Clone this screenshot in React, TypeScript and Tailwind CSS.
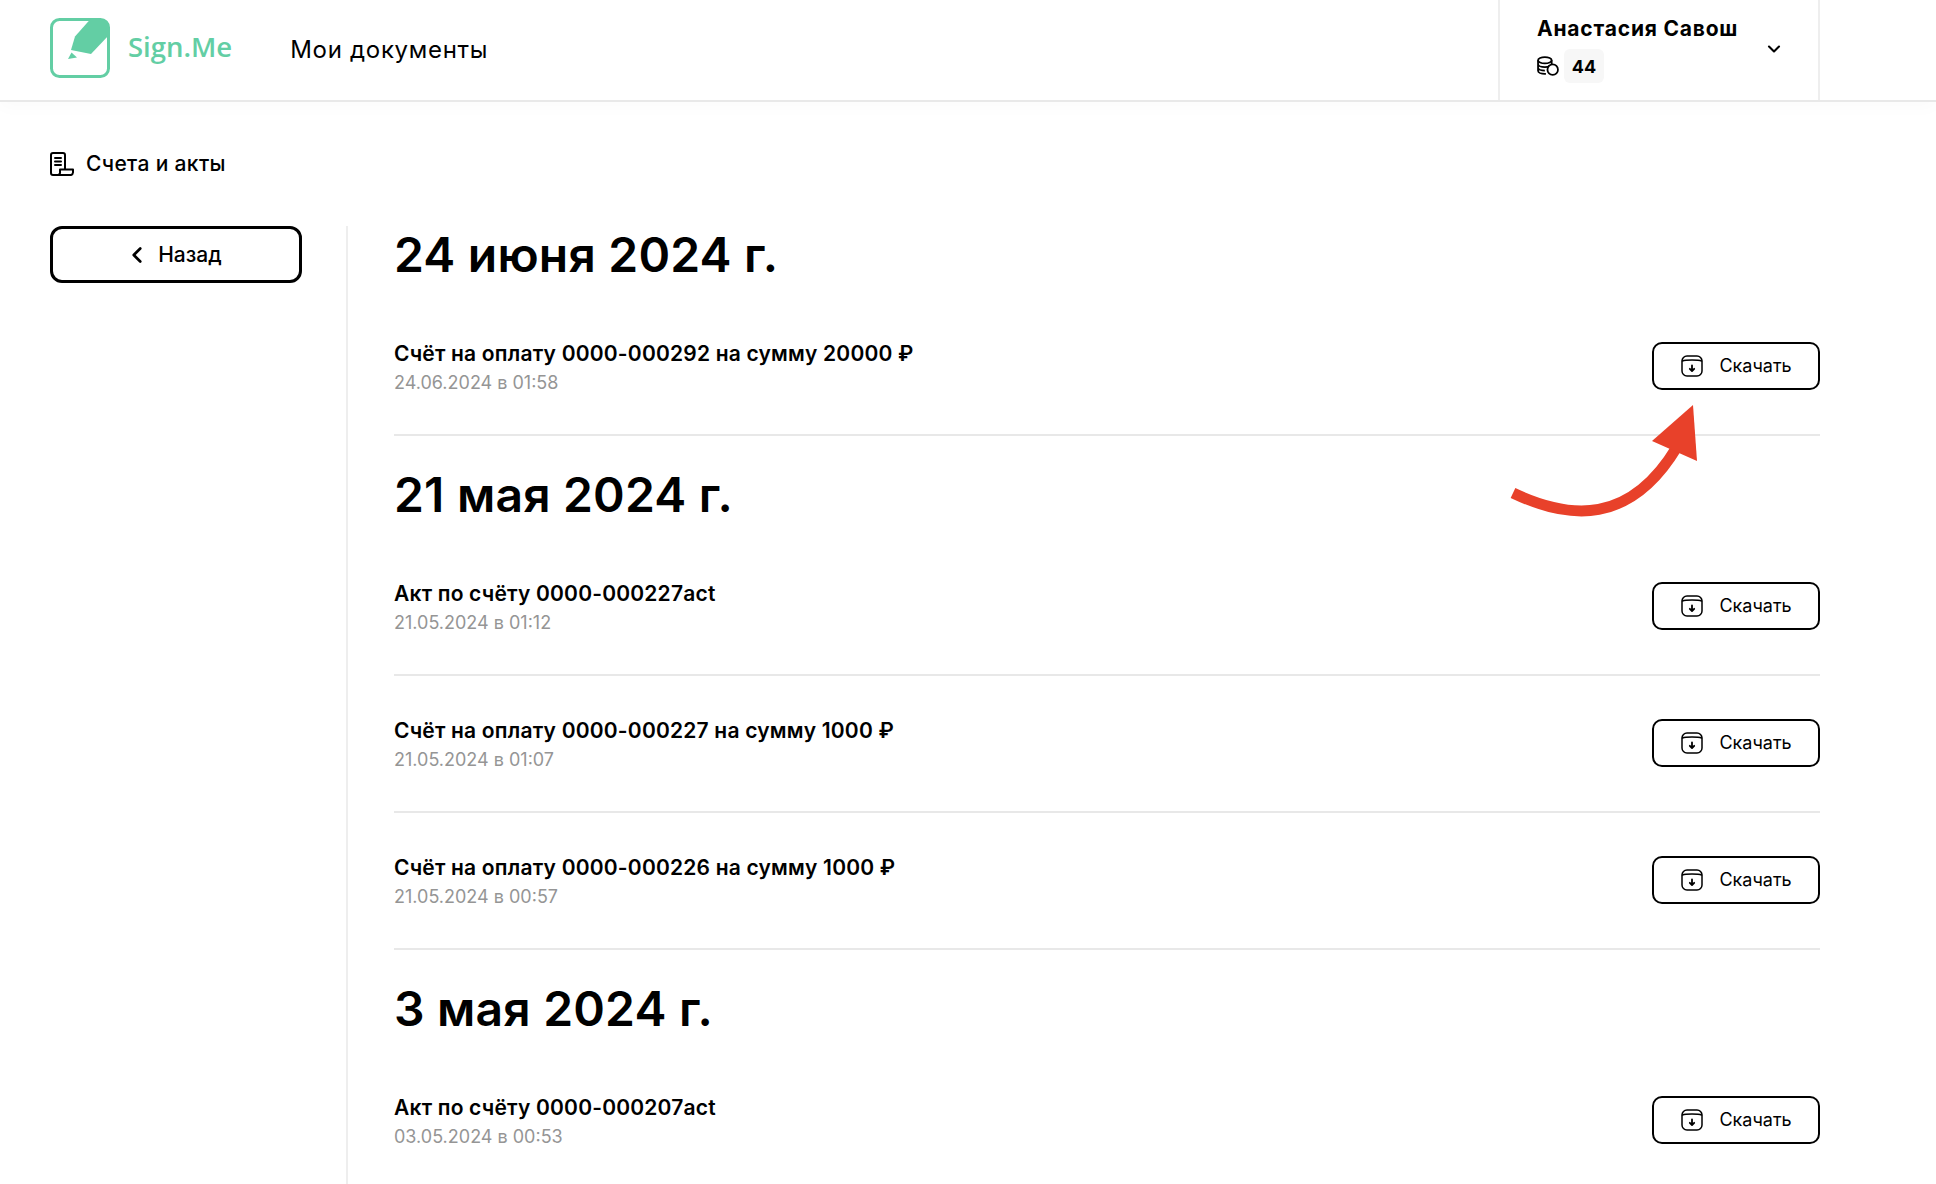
import { ChevronDown, ChevronLeft } from "lucide-react";

type Row = { title: string; date: string };
type Group = { heading: string; rows: Row[] };

const groups: Group[] = [
	{
		heading: "24 июня 2024 г.",
		rows: [{ title: "Счёт на оплату 0000-000292 на сумму 20000 ₽", date: "24.06.2024 в 01:58" }],
	},
	{
		heading: "21 мая 2024 г.",
		rows: [
			{ title: "Акт по счёту 0000-000227act", date: "21.05.2024 в 01:12" },
			{ title: "Счёт на оплату 0000-000227 на сумму 1000 ₽", date: "21.05.2024 в 01:07" },
			{ title: "Счёт на оплату 0000-000226 на сумму 1000 ₽", date: "21.05.2024 в 00:57" },
		],
	},
	{
		heading: "3 мая 2024 г.",
		rows: [{ title: "Акт по счёту 0000-000207act", date: "03.05.2024 в 00:53" }],
	},
];

function Logo() {
	return (
		<svg className="mb-[4px] shrink-0" width="60" height="60" viewBox="0 0 60 60" fill="none">
			<rect x="1.500" y="1.500" width="57" height="57" rx="8" stroke="#63cea4" strokeWidth="3" />
			<path d="M40.500 1H51a8 8 0 0 1 8 8v8L41 36 21 32 25 18.500z" fill="#63cea4" />
			<path d="M21.500 34.500 27 39.500 18 41z" fill="#63cea4" />
		</svg>
	);
}

function ReceiptIcon() {
	return (
		<svg width="24" height="24" viewBox="0 0 24 24" fill="none" stroke="#000" strokeWidth="2" strokeLinecap="round" strokeLinejoin="round">
			<path d="M8 23H3a2 2 0 0 1-2-2V3a2 2 0 0 1 2-2h10a2 2 0 0 1 2 2v14" />
			<path d="M5 6h6M5 9.500h6M5 13h6" />
			<path d="M8 23a2.500 2.500 0 0 0 2-3v-2.500h13V20a3 3 0 0 1-2 3z" />
		</svg>
	);
}

function CoinsIcon() {
	return (
		<svg width="22" height="20" viewBox="0 0 21 19" fill="none" stroke="#000" strokeWidth="1.700">
			<ellipse cx="7.500" cy="4" rx="6.500" ry="3" />
			<path d="M1 4v10c0 1.700 2.900 3 6.500 3h1M1 7.500c0 1.700 2.900 3 6.500 3 2 0 3.500-.3 4.500-1M1 11c0 1.700 2.900 3 6.500 3M14 4v4" />
			<circle cx="15" cy="13" r="5" fill="#fff" />
		</svg>
	);
}

function DownloadIcon() {
	return (
		<svg width="22" height="22" viewBox="0 0 22 22" fill="none" stroke="#000" strokeWidth="1.500" strokeLinecap="round" strokeLinejoin="round">
			<rect x="1" y="1" width="20" height="20" rx="5" />
			<path d="M1.500 6c3-1.200 16-1.200 19 0" />
			<path d="M11 10.500v5M8.800 13.800l2.200 2.200 2.200-2.200" strokeWidth="1.800" />
		</svg>
	);
}

function DownloadButton() {
	return (
		<button className="flex h-[48px] w-[168px] shrink-0 items-center justify-center gap-[16px] rounded-[10px] border-2 border-black bg-white pl-[1px] text-[18px] text-black">
			<DownloadIcon />
			<span>Скачать</span>
		</button>
	);
}

export default function App() {
	return (
		<div className="relative h-[1184px] overflow-hidden bg-white text-black" style={{ fontFamily: "Inter, 'Noto Sans', sans-serif" }}>
			<header className="flex h-[102px] items-center border-b-2 border-[#e8e8e8] pl-[50px] pr-[116px] shadow-[0_6px_16px_rgba(0,0,0,0.02)]">
				<Logo />
				<span className="mb-[6px] ml-[18px] text-[27.500px] font-semibold leading-none text-[#63cea4]" style={{ fontFamily: "'Open Sans', sans-serif" }}>
					Sign.Me
				</span>
				<span className="ml-[58px] text-[24px] tracking-[0.7px]">Мои документы</span>
				<div className="ml-auto flex h-full w-[322px] items-center justify-between border-x-2 border-[#eeeeee] pl-[37px] pr-[34px]">
					<div>
						<div className="text-[21px] font-bold leading-[24px] tracking-[0.8px]">Анастасия Савош</div>
						<div className="mt-[8px] flex items-center gap-[5px]">
							<CoinsIcon />
							<span className="flex h-[34px] w-[40px] items-center justify-center rounded-md bg-[#f7f7f7] text-[18px] font-bold">44</span>
						</div>
					</div>
					<ChevronDown className="mb-[3px]" size={20} strokeWidth={2.500} />
				</div>
			</header>

			<div className="ml-[50px] mt-[50px] flex h-[24px] items-center gap-[12px]">
				<ReceiptIcon />
				<span className="text-[21px] font-medium tracking-[0.35px]">Счета и акты</span>
			</div>

			<main className="mt-[50px] flex pl-[50px] pr-[116px]">
				<aside className="min-h-[960px] w-[298px] shrink-0 border-r-2 border-[#eeeeee]">
					<button className="flex h-[57px] w-[252px] items-center justify-center gap-[8px] rounded-xl border-[3px] border-black pr-[6px] text-[21px] font-medium">
						<ChevronLeft size={26} strokeWidth={2.500} />
						<span>Назад</span>
					</button>
				</aside>
				<section className="ml-[46px] flex-1">
					{groups.map((group, i) => (
						<div key={group.heading} className={i > 0 ? "pt-[30px]" : ""}>
							<h2 className="mb-[15px] text-[48px] font-semibold leading-[58px] tracking-[0.2px]">{group.heading}</h2>
							{group.rows.map((row) => (
								<div key={row.title} className="flex h-[137px] items-center justify-between border-b-2 border-[#e8e8e8] pb-[2px]">
									<div className="pt-[4px]">
										<div className="text-[21px] font-semibold leading-[28px] tracking-[0.2px]">{row.title}</div>
										<div className="mt-[2px] text-[18px] leading-[26px] text-[#959595]">{row.date}</div>
									</div>
									<DownloadButton />
								</div>
							))}
						</div>
					))}
				</section>
			</main>

			{/* стрелка поверх списка */}
			<svg className="absolute left-[1500px] top-[395px]" width="210" height="130" viewBox="1500 395 210 130" fill="none">
				<path d="M1513 493C1570 520 1630 525 1677 447" stroke="#e8412a" strokeWidth="11" />
				<path d="M1693 405L1652 441L1697 461Z" fill="#e8412a" />
			</svg>
		</div>
	);
}
